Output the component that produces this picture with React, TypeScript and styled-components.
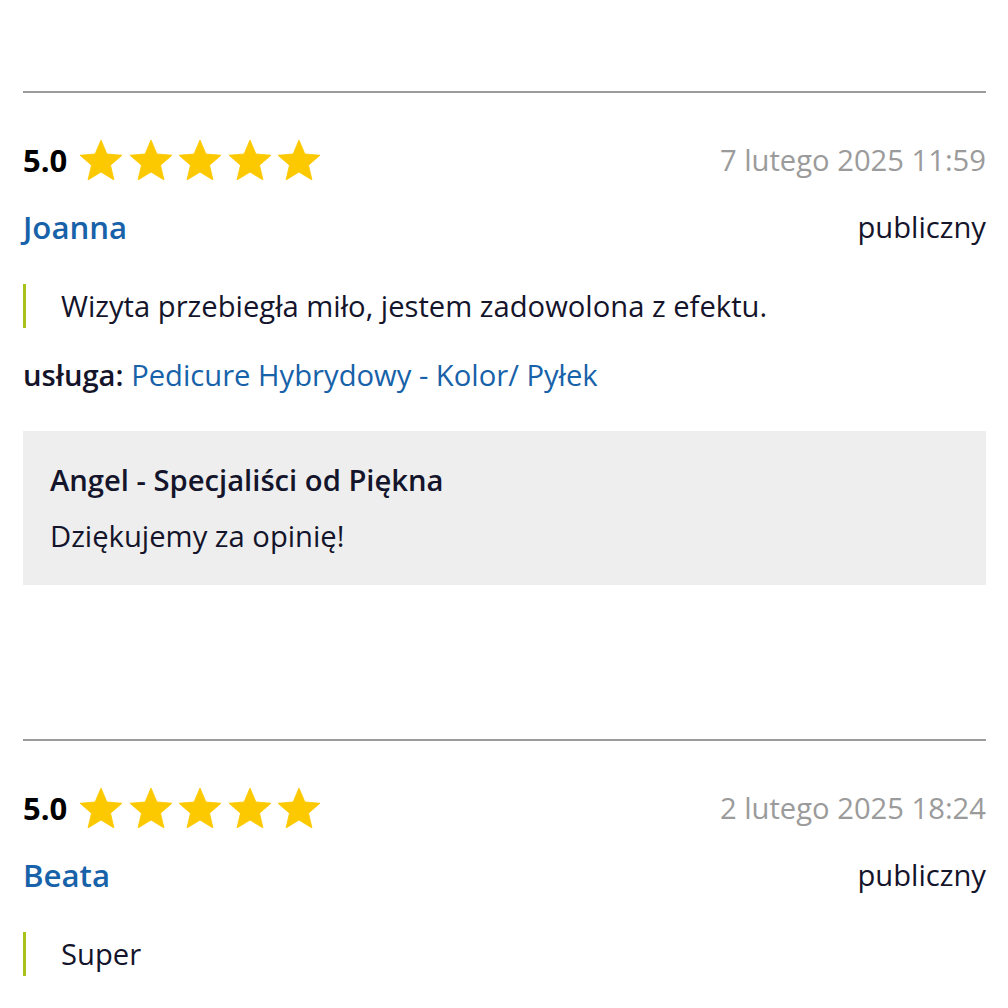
import React from "react";
import styled, { createGlobalStyle } from "styled-components";

const GlobalStyle = createGlobalStyle`
  body {
    margin: 0;
    background: #ffffff;
    font-family: "Open Sans", "Liberation Sans", sans-serif;
    color: #14142b;
  }
`;

const Page = styled.main`
  padding: 91px 22px 0 23px;
`;

const Review = styled.article`
  border-top: 2px solid #9b9b9b;
  padding-top: 47px;
  padding-bottom: 154px;
`;

const Row = styled.div`
  display: flex;
  align-items: center;
  justify-content: space-between;
  height: 40px;
`;

const RatingGroup = styled.div`
  display: flex;
  align-items: center;
  gap: 13px;
`;

const Score = styled.span`
  font-size: 31px;
  font-weight: 700;
  color: #000000;
`;

const Stars = styled.div`
  display: flex;
  gap: 7.5px;
`;

const DateText = styled.span`
  font-size: 29.2px;
  color: #9b9b9b;
`;

const NameRow = styled(Row)`
  margin-top: 27px;
`;

const Author = styled.a`
  font-size: 31.2px;
  font-weight: 600;
  color: #1762a9;
  text-decoration: none;
`;

const Visibility = styled.span`
  font-size: 29.2px;
  color: #14142b;
`;

const Quote = styled.blockquote`
  margin: 37px 0 0;
  border-left: 3px solid #a9c11a;
  padding-left: 35px;
  height: 44px;
  display: flex;
  align-items: center;
  font-size: 29.2px;
`;

const Service = styled.p`
  margin: 27px 0 0;
  line-height: 40px;
  font-size: 29.2px;
`;

const ServiceLabel = styled.strong`
  font-weight: 600;
`;

const ServiceLink = styled.a`
  color: #1762a9;
  text-decoration: none;
`;

const Reply = styled.section`
  margin-top: 36px;
  background: #eeeeee;
  padding: 29px 27px 29px;
`;

const ReplyTitle = styled.h4`
  margin: 0;
  font-size: 29.2px;
  font-weight: 600;
  line-height: 40px;
`;

const ReplyText = styled.p`
  margin: 16px 0 0;
  font-size: 29.2px;
  line-height: 40px;
`;

function Star() {
  return (
    <svg width="42" height="40" viewBox="2 2 20 19">
      <path
        d="M12 17.27L18.18 21l-1.64-7.03L22 9.24l-7.19-.61L12 2 9.19 8.63 2 9.24l5.46 4.73L5.82 21z"
        fill="#fcc900"
        stroke="#fcc900"
        strokeWidth="0.4"
        strokeLinejoin="round"
      />
    </svg>
  );
}

type ReviewData = {
  score: string;
  date: string;
  author: string;
  text: string;
  service?: string;
  reply?: { from: string; text: string };
};

const reviews: ReviewData[] = [
  {
    score: "5.0",
    date: "7 lutego 2025 11:59",
    author: "Joanna",
    text: "Wizyta przebiegła miło, jestem zadowolona z efektu.",
    service: "Pedicure Hybrydowy - Kolor/ Pyłek",
    reply: { from: "Angel - Specjaliści od Piękna", text: "Dziękujemy za opinię!" },
  },
  {
    score: "5.0",
    date: "2 lutego 2025 18:24",
    author: "Beata",
    text: "Super",
  },
];

function ReviewItem({ data }: { data: ReviewData }) {
  return (
    <Review>
      <Row>
        <RatingGroup>
          <Score>{data.score}</Score>
          <Stars>
            {[0, 1, 2, 3, 4].map((i) => (
              <Star key={i} />
            ))}
          </Stars>
        </RatingGroup>
        <DateText>{data.date}</DateText>
      </Row>
      <NameRow>
        <Author href="#">{data.author}</Author>
        <Visibility>publiczny</Visibility>
      </NameRow>
      <Quote>{data.text}</Quote>
      {data.service && (
        <Service>
          <ServiceLabel>usługa:</ServiceLabel> <ServiceLink href="#">{data.service}</ServiceLink>
        </Service>
      )}
      {data.reply && (
        <Reply>
          <ReplyTitle>{data.reply.from}</ReplyTitle>
          <ReplyText>{data.reply.text}</ReplyText>
        </Reply>
      )}
    </Review>
  );
}

export default function App() {
  return (
    <>
      <GlobalStyle />
      <Page>
        {reviews.map((r, i) => (
          <ReviewItem key={i} data={r} />
        ))}
      </Page>
    </>
  );
}
